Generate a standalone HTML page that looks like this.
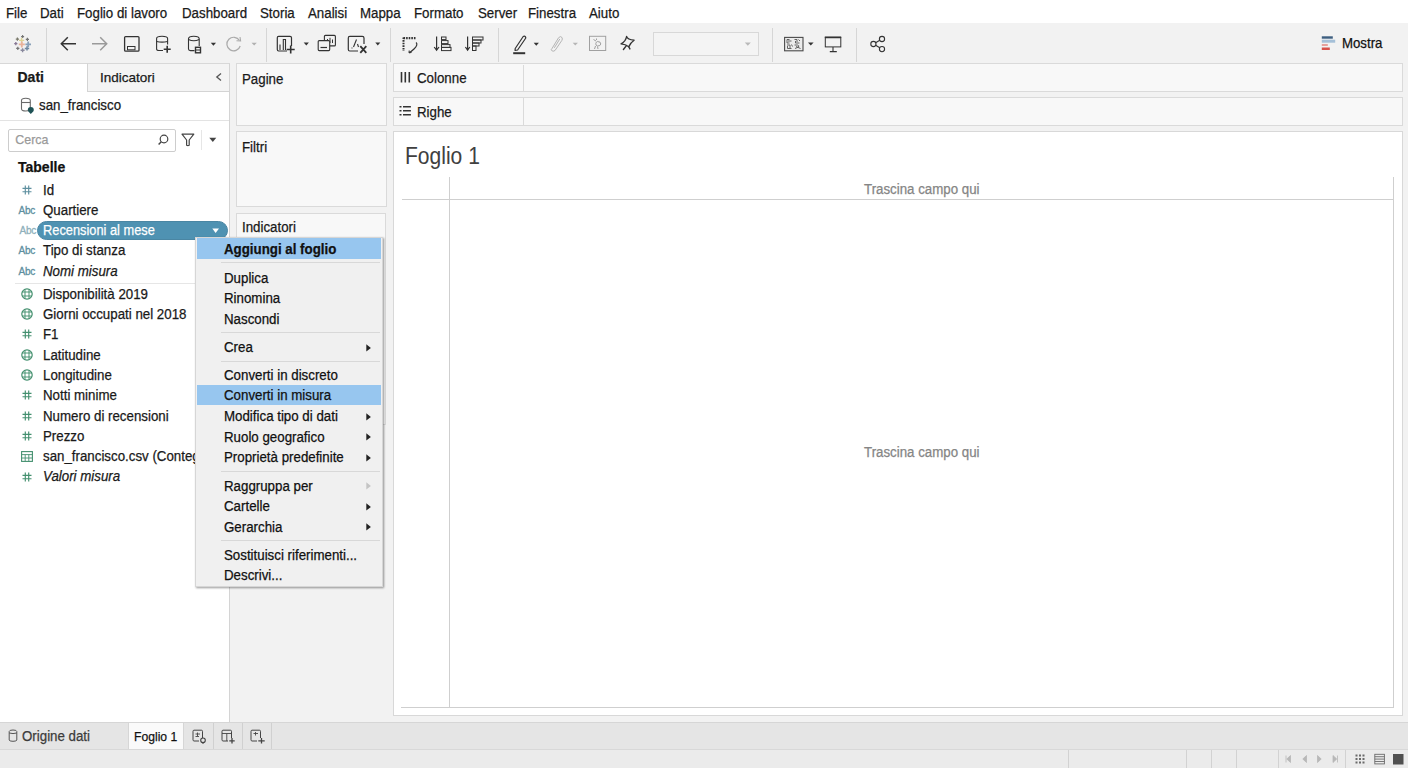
<!DOCTYPE html>
<html><head><meta charset="utf-8">
<style>
*{box-sizing:border-box;margin:0;padding:0}
html,body{width:1408px;height:768px;overflow:hidden;background:#f2f2f2;font-family:"Liberation Sans",sans-serif;color:#1a1a1a}
.a{position:absolute}
.t{position:absolute;white-space:nowrap;line-height:1;font-size:13px;-webkit-text-stroke:0.25px currentColor}
svg{position:absolute;overflow:visible}
#menubar{left:0;top:0;width:1408px;height:23px;background:#fff}
#toolbar{left:0;top:23px;width:1408px;height:40px;background:#f2f2f2}
.sep{position:absolute;width:1px;background:#d6d6d6}
#left{left:0;top:63px;width:230px;height:659px;background:#fff;border-right:1px solid #d4d4d4;border-top:1px solid #d8d8d8}
.card{position:absolute;background:#f8f8f8;border:1px solid #dadada}
#canvas{left:393px;top:131px;width:1010px;height:585px;background:#fff;border:1px solid #d8d8d8}
#tabbar{left:0;top:722px;width:1408px;height:28px;background:#e5e5e5;border-top:1px solid #d6d6d6}
#status{left:0;top:749px;width:1408px;height:19px;background:#ebebeb;border-top:1px solid #d8d8d8}
.ctx{left:195px;top:237px;width:188px;height:350px;background:#f0f0f0;border:1px solid #d6d6d6;box-shadow:1px 1px 2px rgba(0,0,0,.4)}
.n{font-size:14px;transform:scaleX(.95);transform-origin:0 0;margin-top:-0.85px;margin-left:-1px}
.hl{position:absolute;background:#97c6ef}
.msep{position:absolute;height:1px;background:#d8d8d8}
</style></head><body>

<div id="menubar" class="a">
<span class="t n" style="left:6.8px;top:6.5px">File</span>
<span class="t n" style="left:41px;top:6.5px">Dati</span>
<span class="t n" style="left:77.5px;top:6.5px">Foglio di lavoro</span>
<span class="t n" style="left:183px;top:6.5px">Dashboard</span>
<span class="t n" style="left:261px;top:6.5px">Storia</span>
<span class="t n" style="left:308.5px;top:6.5px">Analisi</span>
<span class="t n" style="left:360.5px;top:6.5px">Mappa</span>
<span class="t n" style="left:415px;top:6.5px">Formato</span>
<span class="t n" style="left:479px;top:6.5px">Server</span>
<span class="t n" style="left:529px;top:6.5px">Finestra</span>
<span class="t n" style="left:590px;top:6.5px">Aiuto</span>
</div>

<div id="toolbar" class="a"></div>
<!-- toolbar icons -->
<div class="sep" style="left:46px;top:28px;height:34px"></div>
<div class="sep" style="left:266px;top:28px;height:34px"></div>
<div class="sep" style="left:390px;top:28px;height:34px"></div>
<div class="sep" style="left:498px;top:28px;height:34px"></div>
<div class="sep" style="left:772px;top:28px;height:34px"></div>
<div class="sep" style="left:856px;top:28px;height:34px"></div>
<svg style="left:13px;top:34px;opacity:.8" width="20" height="20"><path d="M8.1 2.6 L11.1 2.6 M9.6 1.1 L9.6 4.1" stroke="#555" stroke-width="1.1"/><path d="M2.8000000000000003 5.2 L6.0 5.2 M4.4 3.6 L4.4 6.800000000000001" stroke="#5b5b4a" stroke-width="1.2"/><path d="M12.8 5.3 L16.0 5.3 M14.4 3.6999999999999997 L14.4 6.9" stroke="#555" stroke-width="1.2"/><path d="M6.0 6.4 L11.2 6.4 M8.6 3.8000000000000003 L8.6 9.0" stroke="#d9cf7e" stroke-width="1.4"/><path d="M1.1999999999999997 9.6 L4.4 9.6 M2.8 8.0 L2.8 11.2" stroke="#6e5a7e" stroke-width="1.3"/><path d="M5.800000000000001 10.4 L11.8 10.4 M8.8 7.4 L8.8 13.4" stroke="#e7a385" stroke-width="1.8"/><path d="M12.399999999999999 10.4 L18.0 10.4 M15.2 7.6000000000000005 L15.2 13.2" stroke="#6f8dab" stroke-width="1.8"/><path d="M3.1999999999999997 14.3 L6.4 14.3 M4.8 12.700000000000001 L4.8 15.9" stroke="#555" stroke-width="1.2"/><path d="M7.6 16.2 L11.6 16.2 M9.6 14.2 L9.6 18.2" stroke="#707088" stroke-width="1.4"/><path d="M11.8 14.4 L16.2 14.4 M14 12.2 L14 16.6" stroke="#4f6e8c" stroke-width="1.5"/></svg>
<svg style="left:60px;top:36px" width="18" height="16"><path d="M16 7.8 L1.5 7.8 M7.8 1.3 L1.3 7.8 L7.8 14.3" fill="none" stroke="#333" stroke-width="1.5"/></svg>
<svg style="left:91px;top:36px" width="18" height="16"><path d="M1 7.8 L15.5 7.8 M9.2 1.3 L15.7 7.8 L9.2 14.3" fill="none" stroke="#9a9a9a" stroke-width="1.5"/></svg>
<svg style="left:123px;top:35px" width="18" height="18"><rect x="1.6" y="1.6" width="14.4" height="14.6" fill="none" stroke="#333" stroke-width="1.3" rx="1"/><rect x="4.5" y="11.5" width="7.5" height="3.3" fill="none" stroke="#333" stroke-width="1"/></svg>
<svg style="left:155px;top:35px" width="20" height="20"><path d="M1.6 3.5 Q1.6 1.2 7 1.2 Q12.6 1.2 12.6 3.5 L12.6 9.5 M1.6 3.5 L1.6 14 Q1.6 15.5 4 15.5 L8 15.5" fill="none" stroke="#333" stroke-width="1.1"/><path d="M1.6 6.5 Q7 7.8 12.6 6.5" fill="none" stroke="#333" stroke-width="1.1"/><path d="M12.2 10.8 L12.2 17.8 M8.7 14.3 L15.7 14.3" stroke="#333" stroke-width="1.6"/></svg>
<svg style="left:187px;top:35px" width="20" height="20"><path d="M1.5 3.8 Q1.5 1.2 6.8 1.2 Q12.2 1.2 12.2 3.8 L12.2 11 M1.5 3.8 L1.5 14 Q1.5 15.6 3.5 15.6 L7.5 15.6" fill="none" stroke="#333" stroke-width="1.1"/><path d="M1.5 4.5 Q6.8 7 12.2 4.5" fill="none" stroke="#333" stroke-width="1.1"/><rect x="8.5" y="12.3" width="5" height="5.5" fill="none" stroke="#333" stroke-width="1.4"/><path d="M8.5 15 L13.5 15" stroke="#333" stroke-width="1"/></svg>
<svg style="left:210px;top:42px" width="8" height="5"><path d="M0.8 0.8 L6 0.8 L3.4 3.8Z" fill="#333"/></svg>
<svg style="left:225px;top:35px" width="18" height="18"><path d="M14.5 5.5 A6.8 6.8 0 1 0 15.2 11" fill="none" stroke="#aaa" stroke-width="1.2"/><path d="M11.5 5.8 L15.6 6 L15 2" fill="none" stroke="#aaa" stroke-width="1.1"/></svg>
<svg style="left:251px;top:42px" width="8" height="5"><path d="M0.5 0.8 L5.8 0.8 L3.15 3.6Z" fill="#b0b0b0"/></svg>
<svg style="left:276px;top:35px" width="24" height="22"><path d="M15.5 11 L15.5 2.8 Q15.5 1.4 14 1.4 L2.6 1.4 Q1.3 1.4 1.3 2.8 L1.3 14.6 Q1.3 16 2.6 16 L11 16" fill="none" stroke="#333" stroke-width="1.2"/><path d="M4 15 L4 9.5 M7.3 15 L7.3 4.5 L9.5 4.5 L9.5 15" fill="none" stroke="#333" stroke-width="1.1"/><path d="M14.7 10.5 L14.7 18.5 M10.7 14.5 L18.7 14.5" stroke="#333" stroke-width="1.6"/></svg>
<svg style="left:303px;top:42px" width="8" height="5"><path d="M0.7 0.5 L5.9 0.5 L3.3 3.6Z" fill="#333"/></svg>
<svg style="left:317px;top:34px" width="20" height="18"><rect x="7.4" y="1.4" width="11" height="10.5" rx="1" fill="#f2f2f2" stroke="#333" stroke-width="1.1"/><path d="M10.5 9 L10.5 5 M13 9 L13 3.8 M15.5 9 L15.5 5.5" stroke="#333" stroke-width="1"/><rect x="1.2" y="6.6" width="11.5" height="10" rx="1" fill="#f2f2f2" stroke="#333" stroke-width="1.1"/><path d="M3.5 13.5 L10 13.5" stroke="#333" stroke-width="1.2"/></svg>
<svg style="left:347px;top:35px" width="24" height="22"><path d="M17 9 L17 3 Q17 1.4 15.3 1.4 L2.8 1.4 Q1.3 1.4 1.3 2.9 L1.3 14.5 Q1.3 16 2.8 16 L11 16" fill="none" stroke="#333" stroke-width="1.2"/><path d="M4.5 13 L5.5 13 M6.5 12 L9.5 4.5 M10.5 9 L11.5 12" fill="none" stroke="#333" stroke-width="1.1"/><path d="M13.3 11.2 L19.3 17.8 M19.3 11.2 L13.3 17.8" stroke="#333" stroke-width="1.8"/></svg>
<svg style="left:375px;top:42px" width="8" height="5"><path d="M0.3 0.5 L5.3 0.5 L2.8 3.6Z" fill="#333"/></svg>
<svg style="left:401px;top:35px" width="20" height="20"><path d="M2.5 2.5 L2.5 16" stroke="#333" stroke-width="2" stroke-dasharray="1.6 1"/><path d="M2.5 3.2 L15 3.2" stroke="#333" stroke-width="2.2" stroke-dasharray="1.6 1"/><path d="M15 7.5 Q17.5 9.5 13 14 Q10.5 16.5 8 17.6" fill="none" stroke="#333" stroke-width="1.2"/><path d="M8.2 15.5 L8 17.8 L10.5 17.5" fill="none" stroke="#333" stroke-width="1"/></svg>
<svg style="left:433px;top:35px" width="20" height="18"><path d="M3.6 1.5 L3.6 14.5 M1.2 12 L3.6 15.2 L6 12" fill="none" stroke="#333" stroke-width="1.2"/><g fill="none" stroke="#333" stroke-width="1"><rect x="8.5" y="2" width="4.5" height="2.6"/><rect x="8.5" y="5.6" width="6.5" height="3"/><rect x="8.5" y="9.6" width="8.5" height="2.8"/><rect x="8.5" y="12.4" width="9.5" height="3.2"/></g></svg>
<svg style="left:465px;top:35px" width="20" height="18"><path d="M2.6 1.5 L2.6 14.5 M0.4 12 L2.6 15.2 L4.8 12" fill="none" stroke="#333" stroke-width="1.2"/><g fill="none" stroke="#333" stroke-width="1"><rect x="7.5" y="2" width="10.5" height="3"/><rect x="7.5" y="5" width="8.5" height="3"/><rect x="7.5" y="8" width="6.5" height="3"/><rect x="7.5" y="11" width="3.5" height="4.5"/></g></svg>
<svg style="left:512px;top:34px" width="16" height="21"><path d="M3.2 14.5 L11.2 2.5 Q12.5 1.5 13.5 2.8 L13.8 4 L5.6 16 L3 16.5 Z" fill="none" stroke="#333" stroke-width="1.2" stroke-linejoin="round"/><path d="M1.2 19.2 L13.2 19.2" stroke="#333" stroke-width="2"/></svg>
<svg style="left:533px;top:42px" width="8" height="5"><path d="M0.7 0.8 L5.9 0.8 L3.3 3.8Z" fill="#333"/></svg>
<svg style="left:549px;top:35px" width="16" height="18"><path d="M3 13.5 L9.5 2.8 Q11.5 0.5 13 2.5 Q13.8 4 12.8 5.5 L6 15.5 Q4 17 2.6 15.5 Q1.8 14.2 3 13.5 Z M5.3 12.8 L10.8 4" fill="none" stroke="#b5b5b5" stroke-width="1"/></svg>
<svg style="left:572px;top:42px" width="8" height="5"><path d="M0.7 0.8 L5.9 0.8 L3.3 3.6Z" fill="#b5b5b5"/></svg>
<svg style="left:588px;top:35px" width="20" height="18"><rect x="1.5" y="1.3" width="16.2" height="14.2" fill="none" stroke="#a0a0a0" stroke-width="1"/><path d="M5.5 4.5 L8 6 M8.5 3.5 L8.5 5 M9.3 6.5 Q13 6.5 12.8 9 Q12.5 11 9.5 11 Q7.5 10.5 7.8 8.5 Q8.2 6.8 9.3 6.5 M7.5 11 L6.5 14 M9.5 11.5 L10 14" fill="none" stroke="#a0a0a0" stroke-width="1"/></svg>
<svg style="left:620px;top:35px" width="16" height="16"><path d="M6.6 1.4 Q7.5 4.6 14.1 5.2 Q10.5 7.5 8.8 11.8 Q5.5 9.2 1 8.9 Q5.8 6.5 6.6 1.4 Z" fill="none" stroke="#333" stroke-width="1.3" stroke-linejoin="round"/><path d="M6.4 10.6 L3.4 14.5 M8.6 11.5 L9.9 13.9" stroke="#333" stroke-width="1.4" stroke-linecap="round"/></svg>
<div class="a" style="left:653px;top:32px;width:106px;height:24px;border:1px solid #d8d8d8;background:#f4f4f4"></div>
<svg style="left:744px;top:42px" width="8" height="5"><path d="M0.8 0.5 L6.8 0.5 L3.8 3.8Z" fill="#b9b9b9"/></svg>
<svg style="left:783px;top:36px" width="22" height="16"><rect x="1.6" y="1.4" width="18.4" height="13.4" fill="#ececec" stroke="#4a4a4a" stroke-width="1.1"/><g fill="none" stroke="#555" stroke-width="0.9"><path d="M4 3.5 L6.5 3.5 M4 3.5 L4 7 L6.5 7 M5 5 L8.5 5 M11.5 3.5 L14 3.5 L14 6 M12.5 5 L12.5 7 L16.5 7 M15.5 3.5 L17 5"/><path d="M4 9 L7 9 L7 12 M4.5 10 L4.5 12.5 L8.5 12.5 M8.5 8.5 L9.5 10.5 M11.5 9 L14.5 9 Q16.5 9.5 15.5 11 L12 12.5 M13 10.5 L17.5 12.5"/></g></svg>
<svg style="left:807px;top:42px" width="8" height="5"><path d="M1 0.5 L6.6 0.5 L3.8 3.5Z" fill="#333"/></svg>
<svg style="left:823px;top:35px" width="20" height="19"><rect x="2.3" y="2.6" width="15.5" height="9.3" fill="none" stroke="#333" stroke-width="1"/><path d="M1.8 2.3 L18.2 2.3" stroke="#333" stroke-width="1.7"/><path d="M10 12 L10 16 M6.8 16.6 L13.8 16.6" stroke="#333" stroke-width="1.1"/></svg>
<svg style="left:869px;top:35px" width="18" height="18"><circle cx="13" cy="4" r="2.6" fill="none" stroke="#333" stroke-width="1.1"/><circle cx="4.4" cy="9" r="2.6" fill="none" stroke="#333" stroke-width="1.1"/><circle cx="13" cy="14.1" r="2.6" fill="none" stroke="#333" stroke-width="1.1"/><path d="M6.6 7.7 L10.8 5.3 M6.6 10.3 L10.8 12.8" stroke="#333" stroke-width="1.1"/></svg>
<svg style="left:1321px;top:36px" width="16" height="15"><rect x="0.8" y="0.3" width="11" height="2.4" fill="#3e5f80"/><rect x="0.8" y="3.7" width="13.4" height="3" fill="#a5c0d8"/><rect x="0.8" y="8" width="6" height="2" fill="#e6a29c"/><rect x="0.8" y="11.5" width="8" height="2.5" fill="#d8524a"/></svg>
<span class="t" style="left:1342px;top:35.6px;font-size:14.5px;transform:scaleX(.912);transform-origin:0 0;color:#111">Mostra</span>

<div id="left" class="a"></div>
<!-- left tabs -->
<div class="a" style="left:87px;top:63px;width:142px;height:29px;background:#f4f4f4;border-top:1px solid #d8d8d8;border-left:1px solid #d4d4d4;border-bottom:1px solid #d4d4d4"></div>
<span class="t" style="left:17.5px;top:70px;font-size:14px;font-weight:bold">Dati</span>
<span class="t" style="left:100px;top:70.9px;font-size:13.5px">Indicatori</span>
<svg style="left:214px;top:72px" width="10" height="10"><path d="M7 1.5 L2.8 5 L7 8.5" fill="none" stroke="#555" stroke-width="1.3"/></svg>
<!-- datasource -->
<svg style="left:20px;top:97px" width="16" height="18"><path d="M1.5 3.5 Q1.5 1.2 5.8 1.2 Q10.3 1.2 10.3 3.5 L10.3 11.8 Q10.3 14 5.8 14 Q1.5 14 1.5 11.8 Z" fill="none" stroke="#6a6a6a" stroke-width="1.1"/><path d="M1.5 5.5 L10.3 5.5" stroke="#6a6a6a" stroke-width="1.1"/><path d="M10.8 10 a3 3 0 0 1 3 3 q0 1.3 -1.3 2.2 L10.8 17 L9.1 15.2 Q7.8 14.3 7.8 13 a3 3 0 0 1 3 -3z" fill="#1f5256"/></svg>
<span class="t n" style="left:39.5px;top:99px">san_francisco</span>
<div class="a" style="left:0;top:120px;width:229px;height:1px;background:#e3e3e3"></div>
<!-- search -->
<div class="a" style="left:8px;top:129px;width:168px;height:23px;border:1px solid #cdcdcd;border-radius:2px;background:#fff"></div>
<span class="t" style="left:15.3px;top:133.8px;font-size:12.4px;color:#9a9a9a">Cerca</span>
<svg style="left:156px;top:133px" width="14" height="14"><circle cx="8" cy="6" r="3.8" fill="none" stroke="#444" stroke-width="1.2"/><path d="M5.3 8.7 L2.6 11.5" stroke="#444" stroke-width="1.4"/></svg>
<svg style="left:181px;top:133px" width="14" height="14"><path d="M1 1.2 L12.8 1.2 L8.2 7 L8.2 12.2 Q6.9 13 5.6 12.2 L5.6 7 Z" fill="none" stroke="#444" stroke-width="1.2" stroke-linejoin="round"/></svg>
<div class="a" style="left:201px;top:130px;width:1px;height:20px;background:#e6e6e6"></div>
<svg style="left:209px;top:137px" width="8" height="6"><path d="M0.3 0.8 L7.3 0.8 L3.8 5 Z" fill="#444"/></svg>
<span class="t" style="left:18px;top:160.3px;font-size:14px;font-weight:bold;color:#111">Tabelle</span>

<svg style="left:22px;top:184.8px" width="10" height="10"><path d="M3.3 0.5 L3.3 9.5 M6.7 0.5 L6.7 9.5 M0.5 3.3 L9.5 3.3 M0.5 6.7 L9.5 6.7" stroke="#5e8f9f" stroke-width="1.15"/></svg>
<span class="t n" style="left:43.5px;top:183.6px;">Id</span>
<span class="t" style="left:18.5px;top:206.0px;font-size:10px;-webkit-text-stroke:0.3px currentColor;color:#5e8f9f;letter-spacing:-0.2px">Abc</span>
<span class="t n" style="left:43.5px;top:203.6px;">Quartiere</span>
<span class="t" style="left:19.5px;top:226.0px;font-size:10px;-webkit-text-stroke:0.3px currentColor;color:#8fb0bb;letter-spacing:-0.2px">Abc</span>
<div class="a" style="left:36.5px;top:220.5px;width:191.5px;height:19.5px;border-radius:10px;background:#4f92b2;border:1px solid #4a86a3"></div>
<span class="t n" style="left:43.5px;top:223.6px;color:#fff;transform:scaleX(.915)">Recensioni al mese</span>
<svg style="left:212px;top:228px" width="8" height="6"><path d="M0.3 0.5 L7 0.5 L3.65 5 Z" fill="#fff"/></svg>
<span class="t" style="left:18.5px;top:246.4px;font-size:10px;-webkit-text-stroke:0.3px currentColor;color:#5e8f9f;letter-spacing:-0.2px">Abc</span>
<span class="t n" style="left:43.5px;top:244px;">Tipo di stanza</span>
<span class="t" style="left:18.5px;top:266.8px;font-size:10px;-webkit-text-stroke:0.3px currentColor;color:#5e8f9f;letter-spacing:-0.2px">Abc</span>
<span class="t n" style="left:43.5px;top:264.4px;font-style:italic;">Nomi misura</span>
<svg style="left:21px;top:287.8px" width="12" height="12"><circle cx="6" cy="6" r="5.2" fill="none" stroke="#44906f" stroke-width="1.2"/><path d="M4 1.2 L4 10.8 M8 1.2 L8 10.8 M1 4 L11 4 M1 8 L11 8" stroke="#44906f" stroke-width="0.95"/></svg>
<span class="t n" style="left:43.5px;top:287.6px;">Disponibilità 2019</span>
<svg style="left:21px;top:308.1px" width="12" height="12"><circle cx="6" cy="6" r="5.2" fill="none" stroke="#44906f" stroke-width="1.2"/><path d="M4 1.2 L4 10.8 M8 1.2 L8 10.8 M1 4 L11 4 M1 8 L11 8" stroke="#44906f" stroke-width="0.95"/></svg>
<span class="t n" style="left:43.5px;top:307.9px;">Giorni occupati nel 2018</span>
<svg style="left:22px;top:329.4px" width="10" height="10"><path d="M3.3 0.5 L3.3 9.5 M6.7 0.5 L6.7 9.5 M0.5 3.3 L9.5 3.3 M0.5 6.7 L9.5 6.7" stroke="#44906f" stroke-width="1.15"/></svg>
<span class="t n" style="left:43.5px;top:328.2px;">F1</span>
<svg style="left:21px;top:348.7px" width="12" height="12"><circle cx="6" cy="6" r="5.2" fill="none" stroke="#44906f" stroke-width="1.2"/><path d="M4 1.2 L4 10.8 M8 1.2 L8 10.8 M1 4 L11 4 M1 8 L11 8" stroke="#44906f" stroke-width="0.95"/></svg>
<span class="t n" style="left:43.5px;top:348.5px;">Latitudine</span>
<svg style="left:21px;top:369.0px" width="12" height="12"><circle cx="6" cy="6" r="5.2" fill="none" stroke="#44906f" stroke-width="1.2"/><path d="M4 1.2 L4 10.8 M8 1.2 L8 10.8 M1 4 L11 4 M1 8 L11 8" stroke="#44906f" stroke-width="0.95"/></svg>
<span class="t n" style="left:43.5px;top:368.8px;">Longitudine</span>
<svg style="left:22px;top:390.3px" width="10" height="10"><path d="M3.3 0.5 L3.3 9.5 M6.7 0.5 L6.7 9.5 M0.5 3.3 L9.5 3.3 M0.5 6.7 L9.5 6.7" stroke="#44906f" stroke-width="1.15"/></svg>
<span class="t n" style="left:43.5px;top:389.1px;">Notti minime</span>
<svg style="left:22px;top:410.6px" width="10" height="10"><path d="M3.3 0.5 L3.3 9.5 M6.7 0.5 L6.7 9.5 M0.5 3.3 L9.5 3.3 M0.5 6.7 L9.5 6.7" stroke="#44906f" stroke-width="1.15"/></svg>
<span class="t n" style="left:43.5px;top:409.4px;">Numero di recensioni</span>
<svg style="left:22px;top:430.9px" width="10" height="10"><path d="M3.3 0.5 L3.3 9.5 M6.7 0.5 L6.7 9.5 M0.5 3.3 L9.5 3.3 M0.5 6.7 L9.5 6.7" stroke="#44906f" stroke-width="1.15"/></svg>
<span class="t n" style="left:43.5px;top:429.7px;">Prezzo</span>
<svg style="left:21px;top:450.7px" width="12" height="11"><rect x="0.6" y="0.6" width="10.8" height="9.8" fill="none" stroke="#44906f" stroke-width="1.1"/><path d="M0.6 3.6 L11.4 3.6 M0.6 7 L11.4 7 M4.2 3.6 L4.2 10.4 M7.8 3.6 L7.8 10.4" stroke="#44906f" stroke-width="0.9"/></svg>
<span class="t n" style="left:43.5px;top:450px;">san_francisco.csv (Conteggio)</span>
<svg style="left:22px;top:471.5px" width="10" height="10"><path d="M3.3 0.5 L3.3 9.5 M6.7 0.5 L6.7 9.5 M0.5 3.3 L9.5 3.3 M0.5 6.7 L9.5 6.7" stroke="#44906f" stroke-width="1.15"/></svg>
<span class="t n" style="left:43.5px;top:470.3px;font-style:italic;">Valori misura</span>
<div class="a" style="left:15px;top:282.5px;width:214px;height:1px;background:#e6e6e6"></div>
<!-- cards -->
<div class="card" style="left:236px;top:63px;width:151px;height:63px"></div>
<span class="t n" style="left:243px;top:73px">Pagine</span>
<div class="card" style="left:236px;top:131px;width:151px;height:76px"></div>
<span class="t n" style="left:243px;top:140.6px">Filtri</span>
<div class="card" style="left:236px;top:213px;width:150px;height:212px"></div>
<span class="t n" style="left:243px;top:221px">Indicatori</span>

<!-- shelves -->
<div class="card" style="left:393px;top:63px;width:1010px;height:29px;background:#f8f8f8"></div>
<div class="a" style="left:523px;top:65px;width:1px;height:26px;background:#dadada"></div>
<svg style="left:400px;top:71px" width="12" height="13"><path d="M1.5 1 L1.5 11.5 M5.3 1 L5.3 11.5 M9.3 1 L9.3 11.5" stroke="#333" stroke-width="1.6"/></svg>
<span class="t n" style="left:418px;top:72px">Colonne</span>
<div class="card" style="left:393px;top:97px;width:1010px;height:29px;background:#f8f8f8"></div>
<div class="a" style="left:523px;top:98px;width:1px;height:27px;background:#dadada"></div>
<svg style="left:399px;top:105px" width="13" height="11"><path d="M0.5 1.8 L2.5 1.8 M0.5 5.7 L2.5 5.7 M0.5 9.7 L2.5 9.7" stroke="#333" stroke-width="1.6"/><path d="M4 1.8 L11.9 1.8 M4 5.7 L11.9 5.7 M4 9.7 L11.9 9.7" stroke="#333" stroke-width="1.4"/></svg>
<span class="t n" style="left:418px;top:105.6px">Righe</span>

<div id="canvas" class="a"></div>
<span class="t" style="left:404.5px;top:144.6px;font-size:23px;transform:scaleX(.915);transform-origin:0 0;color:#404040;-webkit-text-stroke:0">Foglio 1</span>
<div class="a" style="left:449px;top:177px;width:1px;height:531px;background:#cfcfcf"></div>
<div class="a" style="left:1393px;top:177px;width:1px;height:531px;background:#cfcfcf"></div>
<div class="a" style="left:402px;top:199px;width:992px;height:1px;background:#cfcfcf"></div>
<div class="a" style="left:401px;top:707px;width:993px;height:1px;background:#cfcfcf"></div>
<span class="t n" style="left:865px;top:182.4px;color:#858585">Trascina campo qui</span>
<span class="t n" style="left:865px;top:445.8px;color:#858585">Trascina campo qui</span>

<div id="tabbar" class="a"></div>
<svg style="left:8px;top:729px" width="11" height="14"><path d="M1.2 2.5 Q1.2 1 5 1 Q8.8 1 8.8 2.5 L8.8 11 Q8.8 12.3 5 12.3 Q1.2 12.3 1.2 11 Z M1.2 4 Q5 5.2 8.8 4" fill="none" stroke="#555" stroke-width="1"/></svg>
<span class="t n" style="left:23px;top:730.3px;color:#3c3c3c">Origine dati</span>
<div class="a" style="left:128px;top:723px;width:56px;height:26px;background:#fafafa;border-left:1px solid #d6d6d6;border-right:1px solid #d6d6d6"></div>
<span class="t" style="left:133.8px;top:729.6px;font-size:13.5px;transform:scaleX(.9);transform-origin:0 0;color:#111">Foglio 1</span>
<div class="a" style="left:213px;top:723px;width:1px;height:26px;background:#d0d0d0"></div>
<div class="a" style="left:242px;top:723px;width:1px;height:26px;background:#d0d0d0"></div>
<div class="a" style="left:271px;top:723px;width:1px;height:26px;background:#d0d0d0"></div>
<svg style="left:192px;top:729px" width="17" height="16"><path d="M10.5 9 L10.5 2.3 Q10.5 1.2 9.4 1.2 L2 1.2 Q1 1.2 1 2.3 L1 10.8 Q1 12 2 12 L7 12" fill="none" stroke="#444" stroke-width="1"/><path d="M3.5 5 L8 5 M5.5 3.5 L5.5 7 M3.5 7.5 L7 7.5" stroke="#444" stroke-width="0.9"/><circle cx="11" cy="11.3" r="2.3" fill="none" stroke="#444" stroke-width="1.1"/><path d="M11 13.5 L11 14.8" stroke="#444" stroke-width="1.2"/></svg>
<svg style="left:221px;top:729px" width="17" height="16"><path d="M10.5 9 L10.5 2.3 Q10.5 1.2 9.4 1.2 L2 1.2 Q1 1.2 1 2.3 L1 10.8 Q1 12 2 12 L7 12" fill="none" stroke="#444" stroke-width="1"/><path d="M1 4.5 L10.5 4.5 M5.8 4.5 L5.8 12" stroke="#444" stroke-width="0.9"/><path d="M11 9 L11 14.5 M8.3 11.8 L13.7 11.8" stroke="#444" stroke-width="1.3"/></svg>
<svg style="left:250px;top:729px" width="17" height="16"><path d="M10.5 9 L10.5 2.3 Q10.5 1.2 9.4 1.2 L2 1.2 Q1 1.2 1 2.3 L1 10.8 Q1 12 2 12 L7 12" fill="none" stroke="#444" stroke-width="1"/><path d="M3.5 4.5 L8 4.5 M5.5 3 L5.5 6.5" stroke="#444" stroke-width="0.9"/><path d="M11.5 9 L11.5 14.5 M8.3 11.8 L14.7 11.8" stroke="#444" stroke-width="1.3"/></svg>
<div id="status" class="a"></div>
<div class="a" style="left:1068px;top:750px;width:1px;height:18px;background:#d2d2d2"></div>
<div class="a" style="left:1186px;top:750px;width:1px;height:18px;background:#d2d2d2"></div>
<div class="a" style="left:1211px;top:750px;width:1px;height:18px;background:#d2d2d2"></div>
<div class="a" style="left:1236px;top:750px;width:1px;height:18px;background:#d2d2d2"></div>
<div class="a" style="left:1278px;top:750px;width:1px;height:18px;background:#d2d2d2"></div>
<div class="a" style="left:1345px;top:750px;width:1px;height:18px;background:#d2d2d2"></div>
<svg style="left:1285px;top:754px" width="55" height="11"><path d="M1 1.5 L1 8.5 M5.5 1.5 L1.8 5 L5.5 8.5Z M21.5 1.5 L17.8 5 L21.5 8.5Z M32.5 1.5 L36.2 5 L32.5 8.5Z M48 1.5 L51.7 5 L48 8.5Z M52.5 1.5 L52.5 8.5" fill="#b8b8b8" stroke="#b8b8b8" stroke-width="0.8"/></svg>
<svg style="left:1354px;top:753px" width="52" height="13"><g fill="#6a6a6a"><rect x="1.5" y="1.5" width="2" height="2"/><rect x="5" y="1.5" width="2" height="2"/><rect x="8.5" y="1.5" width="2" height="2"/><rect x="1.5" y="5" width="2" height="2"/><rect x="5" y="5" width="2" height="2"/><rect x="8.5" y="5" width="2" height="2"/><rect x="1.5" y="8.5" width="2" height="2"/><rect x="5" y="8.5" width="2" height="2"/><rect x="8.5" y="8.5" width="2" height="2"/></g><rect x="20.8" y="1.3" width="9.6" height="9.6" fill="none" stroke="#6a6a6a" stroke-width="0.9"/><path d="M20.8 3.7 L30.4 3.7 M20.8 6.1 L30.4 6.1 M20.8 8.5 L30.4 8.5" stroke="#6a6a6a" stroke-width="0.9"/><rect x="39" y="1" width="10.5" height="10.5" fill="#505050"/></svg>

<!-- ctx -->
<div class="a ctx"></div>
<div class="hl" style="left:197px;top:238px;width:184px;height:21px"></div>
<div class="hl" style="left:197px;top:385px;width:184px;height:20px"></div>
<div class="msep" style="left:221px;top:262px;width:159px"></div>
<div class="msep" style="left:221px;top:332px;width:159px"></div>
<div class="msep" style="left:221px;top:360.5px;width:159px"></div>
<div class="msep" style="left:221px;top:470.5px;width:159px"></div>
<div class="msep" style="left:221px;top:539.5px;width:159px"></div>
<span class="t n" style="left:224.6px;top:243.3px;font-weight:bold;color:#111">Aggiungi al foglio</span>
<span class="t n" style="left:224.6px;top:271.5px;color:#111">Duplica</span>
<span class="t n" style="left:224.6px;top:292px;color:#111">Rinomina</span>
<span class="t n" style="left:224.6px;top:312.5px;color:#111">Nascondi</span>
<span class="t n" style="left:224.6px;top:340.8px;color:#111">Crea</span>
<svg style="left:366px;top:343.5px" width="6" height="8"><path d="M0.3 0.2 L4.9 3.9 L0.3 7.6 Z" fill="#222"/></svg>
<span class="t n" style="left:224.6px;top:368.8px;color:#111">Converti in discreto</span>
<span class="t n" style="left:224.6px;top:389.3px;color:#111">Converti in misura</span>
<span class="t n" style="left:224.6px;top:409.8px;color:#111">Modifica tipo di dati</span>
<svg style="left:366px;top:412.5px" width="6" height="8"><path d="M0.3 0.2 L4.9 3.9 L0.3 7.6 Z" fill="#222"/></svg>
<span class="t n" style="left:224.6px;top:430.4px;color:#111">Ruolo geografico</span>
<svg style="left:366px;top:433.09999999999997px" width="6" height="8"><path d="M0.3 0.2 L4.9 3.9 L0.3 7.6 Z" fill="#222"/></svg>
<span class="t n" style="left:224.6px;top:450.9px;color:#111">Proprietà predefinite</span>
<svg style="left:366px;top:453.59999999999997px" width="6" height="8"><path d="M0.3 0.2 L4.9 3.9 L0.3 7.6 Z" fill="#222"/></svg>
<span class="t n" style="left:224.6px;top:479.5px;color:#111">Raggruppa per</span>
<svg style="left:366px;top:482.2px" width="6" height="8"><path d="M0.3 0.2 L4.9 3.9 L0.3 7.6 Z" fill="#c4c4c4"/></svg>
<span class="t n" style="left:224.6px;top:500px;color:#111">Cartelle</span>
<svg style="left:366px;top:502.7px" width="6" height="8"><path d="M0.3 0.2 L4.9 3.9 L0.3 7.6 Z" fill="#222"/></svg>
<span class="t n" style="left:224.6px;top:520.5px;color:#111">Gerarchia</span>
<svg style="left:366px;top:523.2px" width="6" height="8"><path d="M0.3 0.2 L4.9 3.9 L0.3 7.6 Z" fill="#222"/></svg>
<span class="t n" style="left:224.6px;top:548.7px;color:#111">Sostituisci riferimenti...</span>
<span class="t n" style="left:224.6px;top:569.2px;color:#111">Descrivi...</span>
</body></html>
